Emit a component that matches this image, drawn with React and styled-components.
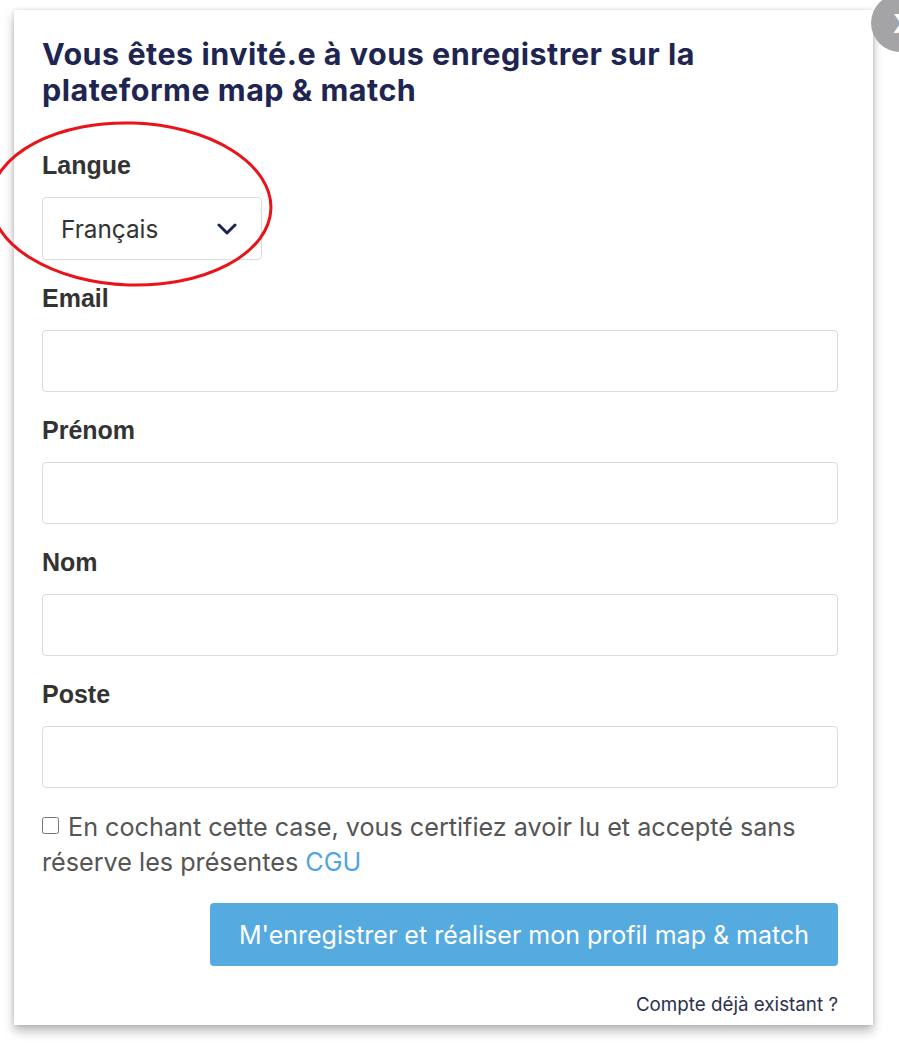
import React from "react";
import styled, { createGlobalStyle } from "styled-components";

const GlobalStyle = createGlobalStyle`
  html, body {
    margin: 0;
    padding: 0;
    background: #ffffff;
    font-family: Inter, "Noto Sans", Arial, sans-serif;
    overflow: hidden;
  }
`;

const Page = styled.div`
  position: relative;
  width: 899px;
  height: 1050px;
  padding: 10px 26px 0 14px;
  box-sizing: border-box;
`;

const Card = styled.div`
  position: relative;
  background: #fff;
  box-shadow: 0 6px 10px rgba(0, 0, 0, 0.28), 0 0 4px rgba(0, 0, 0, 0.12);
  padding: 26px 35px 12px 28px;
  height: 1015px;
  box-sizing: border-box;
  display: flex;
  flex-direction: column;
`;

const Title = styled.h2`
  margin: 0 0 42px;
  font-size: 30.5px;
  line-height: 36px;
  font-weight: 700;
  color: #1e2552;
  letter-spacing: 0.5px;
  white-space: nowrap;
`;

const Field = styled.div`
  display: flex;
  flex-direction: column;
  margin-bottom: 23px;
`;

const Label = styled.label`
  font-family: "Liberation Sans", Arial, sans-serif;
  font-size: 25px;
  line-height: 30px;
  font-weight: 700;
  color: #333;
  margin-bottom: 17px;
`;

const SelectBox = styled.div`
  width: 220px;
  height: 63px;
  box-sizing: border-box;
  border: 1px solid #dcdcdc;
  border-radius: 4px;
  display: flex;
  align-items: center;
  justify-content: space-between;
  padding: 0 24px 0 18px;
  font-size: 24.3px;
  color: #333;
`;

const Input = styled.input`
  width: 100%;
  height: 62px;
  box-sizing: border-box;
  border: 1px solid #dcdcdc;
  border-radius: 4px;
  font-size: 22px;
  padding: 0 16px;
  outline: none;
`;

const Consent = styled.div`
  font-size: 25.2px;
  line-height: 35px;
  color: #555;
  margin-top: -1px;
`;

const Check = styled.input`
  width: 17px;
  height: 17px;
  margin: 0 9px 0 0;
  vertical-align: 2px;
`;

const Link = styled.a`
  color: #4fa6dc;
  text-decoration: none;
`;

const Actions = styled.div`
  display: flex;
  justify-content: flex-end;
  margin-top: 23px;
`;

const Button = styled.button`
  width: 628px;
  height: 63px;
  border: none;
  border-radius: 4px;
  background: #55aadf;
  color: #fff;
  font-family: inherit;
  font-size: 25px;
  cursor: pointer;
`;

const Existing = styled.div`
  text-align: right;
  font-size: 18.8px;
  line-height: 22px;
  color: #2b3150;
  margin-top: 28px;
`;

const Close = styled.div`
  position: absolute;
  top: -6px;
  left: 871px;
  width: 58px;
  height: 58px;
  border-radius: 50%;
  background: #a4a4a6;
  color: #fff;
  font-size: 26px;
  font-weight: 700;
  display: flex;
  align-items: center;
  padding-left: 22px;
  box-sizing: border-box;
`;

const Annotation = styled.svg`
  position: absolute;
  left: 0;
  top: 0;
  pointer-events: none;
`;

const fields = ["Email", "Prénom", "Nom", "Poste"];

export default function App() {
  return (
    <Page>
      <GlobalStyle />
      <Card>
        <Title>
          Vous êtes invité.e à vous enregistrer sur la
          <br />
          plateforme map &amp; match
        </Title>
        <Field>
          <Label>Langue</Label>
          <SelectBox>
            Français
            <svg width="20" height="12" viewBox="0 0 20 12">
              <path d="M2 2 L10 10 L18 2" fill="none" stroke="#1e2552" strokeWidth="3" strokeLinecap="round" strokeLinejoin="round" />
            </svg>
          </SelectBox>
        </Field>
        {fields.map((f) => (
          <Field key={f}>
            <Label>{f}</Label>
            <Input type="text" />
          </Field>
        ))}
        <Consent>
          <Check type="checkbox" />
          En cochant cette case, vous certifiez avoir lu et accepté sans réserve les présentes <Link href="#">CGU</Link>
        </Consent>
        <Actions>
          <Button>M'enregistrer et réaliser mon profil map &amp; match</Button>
        </Actions>
        <Existing>Compte déjà existant ?</Existing>
      </Card>
      <Close>X</Close>
      <Annotation width="300" height="300" viewBox="0 0 300 300">
        <ellipse cx="131" cy="204" rx="140" ry="81" fill="none" stroke="#e8141a" strokeWidth="3" transform="rotate(2 131 204)" />
      </Annotation>
    </Page>
  );
}
